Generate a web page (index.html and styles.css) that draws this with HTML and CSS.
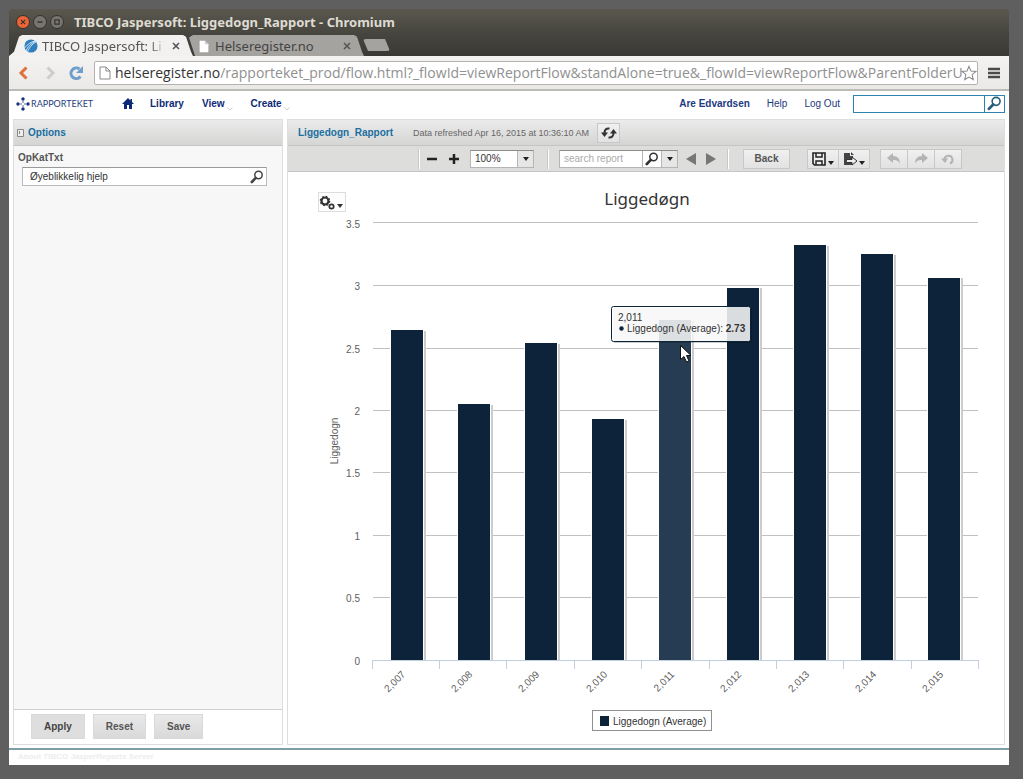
FILE: index.html
```
<!DOCTYPE html>
<html lang="en">
<head>
<meta charset="utf-8">
<title>TIBCO Jaspersoft: Liggedogn_Rapport</title>
<link rel="stylesheet" href="styles.css">
</head>
<body>
<svg class="defs" aria-hidden="true">
  <symbol id="lens" viewBox="0 0 14 14"><circle cx="8.500" cy="5" r="3.700" fill="#fff" fill-opacity=".5" stroke="currentColor" stroke-width="1.500"/><path d="M5.800 7.900 1.800 12" stroke="currentColor" stroke-width="2.600" stroke-linecap="round"/></symbol>
  <symbol id="caret" viewBox="0 0 6 4"><path d="M0 0h6L3 4z" fill="currentColor"/></symbol>
</svg>
<div class="window">
  <header class="titlebar">
    <button class="orb orb-close" aria-label="Close"><svg viewBox="0 0 14 14"><path d="m4.500 4.500 5 5m0-5-5 5"/></svg></button>
    <button class="orb" aria-label="Minimize"><svg viewBox="0 0 14 14"><path d="M4 7h6"/></svg></button>
    <button class="orb" aria-label="Maximize"><svg viewBox="0 0 14 14"><path d="M4.500 4.500h5v5h-5z"/></svg></button>
    <span class="window-title">TIBCO Jaspersoft: Liggedogn_Rapport - Chromium</span>
  </header>
  <div class="tabs">
    <div class="tab tab-active">
      <svg class="favicon" viewBox="0 0 16 16"><circle cx="8" cy="8" r="7.500" fill="#2f7fbf"/><path d="M2 14C4 9 8 5 14 2M4 15c1-4 5-9 10-12M1 10c3-4 6-6 12-8" stroke="#e4f1fa" fill="none"/></svg>
      <span class="tab-text">TIBCO Jaspersoft: Li</span>
      <button class="tab-close" aria-label="Close tab"><svg viewBox="0 0 8 8"><path d="m1 1 6 6m0-6L1 7"/></svg></button>
    </div>
    <div class="tab tab-back">
      <svg class="favicon" viewBox="0 0 16 16"><path d="M3 2h6l4 4v9H3z" fill="#fff"/><path d="M9 2v4h4" fill="#ccc"/></svg>
      <span class="tab-text">Helseregister.no</span>
      <button class="tab-close" aria-label="Close tab"><svg viewBox="0 0 8 8"><path d="m1 1 6 6m0-6L1 7"/></svg></button>
    </div>
    <button class="tab-new" aria-label="New tab"></button>
  </div>
  <div class="navbar">
    <button class="nav-btn" aria-label="Back"><svg viewBox="0 0 16 16"><path d="M10.500 2.500 5 8l5.500 5.500" stroke="#e0713c" stroke-width="3" fill="none"/></svg></button>
    <button class="nav-btn" aria-label="Forward"><svg viewBox="0 0 16 16"><path d="M5.500 2.500 11 8l-5.500 5.500" stroke="#cfcdca" stroke-width="3" fill="none"/></svg></button>
    <button class="nav-btn" aria-label="Reload"><svg viewBox="0 0 16 16"><path d="M12.500 11.500A5.300 5.300 0 1 1 11.500 4" stroke="#6f9dcc" stroke-width="3" fill="none"/><path d="M15 1v7H8z" fill="#6f9dcc"/></svg></button>
    <div class="address">
      <svg class="page-icon" viewBox="0 0 12 14"><path d="M1 1h6l4 4v8H1zM7 1v4h4" fill="#fff" stroke="#8a8a8a"/></svg>
      <div class="url" role="textbox" aria-label="Address"><span class="host">helseregister.no</span>/rapporteket_prod/flow.html?_flowId=viewReportFlow&amp;standAlone=true&amp;_flowId=viewReportFlow&amp;ParentFolderU</div>
      <svg class="star" viewBox="0 0 18 18"><path d="m9 1.500 2.200 5.200 5.600.5-4.300 3.700 1.300 5.500L9 13.500l-4.800 2.900 1.300-5.500L1.200 7.200l5.600-.5z" fill="#fff" stroke="#8a8a8a" stroke-width="1.200"/></svg>
    </div>
    <button class="menu-btn" aria-label="Menu"><svg viewBox="0 0 12 12"><path d="M0 2h12M0 6h12M0 10h12" stroke="#4a4a4a" stroke-width="2.500"/></svg></button>
  </div>

  <div class="page">
    <nav class="site-nav">
      <a class="logo" href="#"><svg viewBox="0 0 14 14" fill="#16307f"><circle cx="7" cy="2" r="1.700"/><circle cx="7" cy="12" r="1.700"/><circle cx="2" cy="7" r="1.700"/><circle cx="12" cy="7" r="1.700"/><circle cx="5" cy="7" r=".7"/><circle cx="9" cy="7" r=".7"/><circle cx="7" cy="5" r=".7"/><circle cx="7" cy="9" r=".7"/></svg><span>RAPPORTEKET</span></a>
      <a class="home" href="#" aria-label="Home"><svg viewBox="0 0 12 11"><path d="M6 0 0 6h2v5h3V7h2v4h3V6h2L10 4V1H8.500v1.500z" fill="#0d2a77"/></svg></a>
      <a class="main-link" href="#">Library</a>
      <a class="main-link" href="#">View<svg class="drop" viewBox="0 0 6 4"><path d="M.5.500 3 3 5.500.500"/></svg></a>
      <a class="main-link" href="#">Create<svg class="drop" viewBox="0 0 6 4"><path d="M.5.500 3 3 5.500.500"/></svg></a>
      <div class="account">
        <a class="user" href="#">Are Edvardsen</a>
        <a href="#">Help</a>
        <a href="#">Log Out</a>
        <form class="site-search"><input type="text" aria-label="Search"><button type="button" aria-label="Search"><svg><use href="#lens"/></svg></button></form>
      </div>
    </nav>

    <main class="columns">
      <section class="panel options">
        <h2 class="panel-head"><svg viewBox="0 0 7 8"><path d="M.5.500h6v7h-6zM2.500 2v3" fill="#eee" stroke="#888"/></svg>Options</h2>
        <div class="options-body">
          <label for="opkat">OpKatTxt</label>
          <div class="field"><input id="opkat" type="text" value="Øyeblikkelig hjelp"><svg><use href="#lens"/></svg></div>
        </div>
        <div class="actions">
          <button class="btn btn-hot">Apply</button><button class="btn">Reset</button><button class="btn">Save</button>
        </div>
      </section>

      <section class="panel report">
        <div class="panel-head">
          <h2>Liggedogn_Rapport</h2>
          <span class="refreshed">Data refreshed Apr 16, 2015 at 10:36:10 AM</span>
          <button class="tool refresh" aria-label="Refresh"><svg viewBox="0 0 16 12"><path d="M8.500 1.500C5 1 3.500 3 3.500 6M7.500 10.500c3.500.5 5-1.500 5-4.500" fill="none" stroke="#333" stroke-width="2"/><path d="M0 5.500h7L3.500 10zM9 6.500h7L12.500 2z" fill="#333"/></svg></button>
        </div>
        <div class="toolbar">
          <span class="sep"></span>
          <button class="glyph" aria-label="Zoom out"><svg viewBox="0 0 12 12"><path d="M1 6h10" stroke="#222" stroke-width="2.500"/></svg></button>
          <button class="glyph" aria-label="Zoom in"><svg viewBox="0 0 12 12"><path d="M1 6h10M6 1v10" stroke="#222" stroke-width="2.500"/></svg></button>
          <div class="combo"><input class="zoom" type="text" value="100%" aria-label="Zoom"><button aria-label="Zoom levels"><svg class="caret"><use href="#caret"/></svg></button></div>
          <span class="sep"></span>
          <div class="combo"><input class="find" type="text" placeholder="search report" aria-label="Search report"><button class="find-go" aria-label="Find"><svg class="lens"><use href="#lens"/></svg></button><button aria-label="Find options"><svg class="caret"><use href="#caret"/></svg></button></div>
          <button class="glyph" aria-label="Previous"><svg viewBox="0 0 12 12"><path d="M11 0v12L1 6z" fill="#777"/></svg></button>
          <button class="glyph glyph-next" aria-label="Next"><svg viewBox="0 0 12 12"><path d="M1 0v12l10-6z" fill="#777"/></svg></button>
          <span class="sep"></span>
          <button class="tool back">Back</button>
          <div class="group">
            <button class="tool" aria-label="Save"><svg class="icon" viewBox="0 0 14 14"><path d="M1 1h12v12H2.500L1 11.500z" fill="#eee" stroke="#222" stroke-width="1.600"/><path d="M4 1v4h6V1M4 13V9h6v4" fill="none" stroke="#222" stroke-width="1.500"/></svg><svg class="caret low"><use href="#caret"/></svg></button>
            <button class="tool" aria-label="Export"><svg class="icon" viewBox="0 0 14 14"><path d="M1 1h6v3h3v9H1z" fill="#444"/><path d="M8 0v3h3z" fill="#444"/><path d="M4 7.500h5V5l5 4-5 4v-2.500H4" fill="#eee" stroke="#333"/></svg><svg class="caret low"><use href="#caret"/></svg></button>
          </div>
          <div class="group group-off">
            <button class="tool" disabled aria-label="Undo"><svg class="icon" viewBox="0 0 14 14"><path d="M0 6 6 1v3c5 0 7 3 7 8-1-3-3-4-7-4v3z" fill="#b4b4b4"/></svg></button>
            <button class="tool" disabled aria-label="Redo"><svg class="icon" viewBox="0 0 14 14"><path d="M14 6 8 1v3c-5 0-7 3-7 8 1-3 3-4 7-4v3z" fill="#b4b4b4"/></svg></button>
            <button class="tool" disabled aria-label="Undo all"><svg class="icon" viewBox="0 0 14 14"><path d="M3.500 7.500A4 4 0 1 1 9 11.500" fill="none" stroke="#b4b4b4" stroke-width="2"/><path d="M0 6.500h7L4 11z" fill="#b4b4b4"/></svg></button>
          </div>
        </div>
        <div class="report-body">
          <svg class="chart" viewBox="0 0 716 572" role="img" aria-label="Liggedøgn">
            <g class="options-icon">
              <rect x="30.500" y="20.500" width="27" height="19" fill="#fdfdfd" stroke="#ddd"/>
              <circle cx="37" cy="29" r="3.500" fill="none" stroke="#333" stroke-width="2.200"/>
              <circle cx="37" cy="29" r="4.700" fill="none" stroke="#333" stroke-width="1.200" stroke-dasharray="1.800 1.900"/>
              <circle cx="43.500" cy="34.500" r="2.200" fill="none" stroke="#333" stroke-width="1.700"/>
              <path d="M49 32h6l-3 4z" fill="#333"/>
            </g>
            <text class="chart-title" x="359" y="33">Liggedøgn</text>
            <path class="grid" d="M85 50.500h605M85 113.500h605M85 176.500h605M85 238.500h605M85 300.500h605M85 363.500h605M85 425.500h605"/>
            <g class="axis-y">
              <text x="72" y="56">3.5</text><text x="72" y="118">3</text><text x="72" y="181">2.5</text><text x="72" y="243">2</text><text x="72" y="305">1.5</text><text x="72" y="368">1</text><text x="72" y="430">0.5</text><text x="72" y="493">0</text>
            </g>
            <text class="axis-title" transform="translate(50 269) rotate(-90)">Liggedogn</text>
            <g class="shadow">
              <rect x="104" y="159" width="34" height="329"/><rect x="171" y="233" width="34" height="255"/><rect x="238" y="172" width="34" height="316"/><rect x="305" y="248" width="34" height="240"/><rect x="372" y="149" width="34" height="339"/><rect x="440" y="116" width="34" height="372"/><rect x="507" y="74" width="34" height="414"/><rect x="574" y="83" width="34" height="405"/><rect x="641" y="106" width="34" height="382"/>
            </g>
            <g class="bars">
              <rect x="102.500" y="157.500" width="33" height="331"/><rect x="169.500" y="231.500" width="33" height="257"/><rect x="236.500" y="170.500" width="33" height="318"/><rect x="303.500" y="246.500" width="33" height="242"/><rect class="hover" x="370.500" y="147.500" width="33" height="341"/><rect x="438.500" y="115.500" width="33" height="373"/><rect x="505.500" y="72.500" width="33" height="416"/><rect x="572.500" y="81.500" width="33" height="407"/><rect x="639.500" y="105.500" width="33" height="383"/>
            </g>
            <path class="axis-line" d="M84 488.500h607M84.500 489v8M151.500 489v8M218.500 489v8M286.500 489v8M353.500 489v8M421.500 489v8M488.500 489v8M555.500 489v8M623.500 489v8M690.500 489v8"/>
            <g class="axis-x">
              <text transform="translate(118 503) rotate(-45)">2,007</text><text transform="translate(185 503) rotate(-45)">2,008</text><text transform="translate(252 503) rotate(-45)">2,009</text><text transform="translate(320 503) rotate(-45)">2,010</text><text transform="translate(387 503) rotate(-45)">2,011</text><text transform="translate(454 503) rotate(-45)">2,012</text><text transform="translate(522 503) rotate(-45)">2,013</text><text transform="translate(589 503) rotate(-45)">2,014</text><text transform="translate(656 503) rotate(-45)">2,015</text>
            </g>
            <rect x="304.500" y="538.500" width="119" height="20" fill="#fff" stroke="#909090"/>
            <rect x="312" y="544" width="9" height="10" fill="#0d233a"/>
            <text class="label-dark" x="325" y="553">Liggedogn (Average)</text>
            <g class="tooltip">
              <rect class="tip-shadow" x="325" y="136" width="139" height="35" rx="2"/>
              <rect class="tip-box" x="323.500" y="134.500" width="139" height="35" rx="2"/>
              <text class="label-dark" x="330" y="149">2,011</text>
              <circle cx="333.500" cy="156.500" r="2.200" fill="#0d233a"/>
              <text class="label-dark" x="339" y="160">Liggedogn (Average): <tspan font-weight="bold">2.73</tspan></text>
            </g>
            <path d="M392.500 173.500v14l3.500-3 2.500 5.500 2.500-1-2.500-5.500h4.500z" fill="#fff" stroke="#111"/>
          </svg>
        </div>
      </section>
    </main>
    <footer class="site-foot"><a href="#">About TIBCO JasperReports Server</a></footer>
  </div>
</div>
</body>
</html>
```
FILE: styles.css
```
* { box-sizing: border-box; }
html, body { height: 100%; }
body {
  margin: 0;
  padding: 9px 14px 14px 9px;
  background: #5f5f5f;
  font: 10px/14px "Liberation Sans", Arial, sans-serif;
  color: #555;
}
button, input { font: inherit; color: inherit; margin: 0; padding: 0; border: 0; border-radius: 0; background: none; min-width: 0; outline: 0; }
svg { display: block; flex: none; }
a { color: #1d3a80; text-decoration: none; }
h2 { margin: 0; font-size: 10px; line-height: 14px; }
.defs { position: absolute; width: 0; height: 0; }

.window { display: flex; flex-direction: column; height: 100%; background: #3c3b37; border-radius: 5px 5px 0 0; overflow: hidden; }
.titlebar { display: flex; align-items: center; gap: 3px; height: 26px; padding-left: 7px; background: linear-gradient(#5a584e, #45443e); }
.orb { width: 14px; height: 14px; border-radius: 50%; background: #77756d; border: 1px solid #33322d; }
.orb svg { width: 12px; height: 12px; fill: none; stroke: #36352f; stroke-width: 1.5; }
.orb-close { background: #ee6438; }
.window-title { margin-left: 7px; font: bold 13px/18px "Noto Sans", sans-serif; color: #dfdbd2; }

.tabs { display: flex; align-items: flex-end; height: 21px; background: linear-gradient(#45443e, #3a3935); }
.tab { display: flex; align-items: center; height: 21px; font: 13px/20px "Noto Sans", sans-serif; }
.tab-active { width: 184px; padding: 0 13px 0 15px; background: #f2f1f0; color: #555; clip-path: polygon(0 100%, 5px 80%, 10px 8%, 13px 0, 174px 0, 177px 8%, 182px 80%, 100% 100%); }
.tab-back { width: 178px; margin-left: -7px; padding: 0 13px 0 11px; background: #a5a39f; color: #444; clip-path: polygon(9px 100%, 3px 12%, 7px 0, 168px 0, 171px 8%, 176px 80%, 100% 100%); }
.favicon { width: 14px; height: 14px; }
.tab-text { flex: 1; margin: 0 7px 0 4px; white-space: nowrap; }
.tab-active .tab-text { mask-image: linear-gradient(90deg, #000 88%, transparent); }
.tab-close svg { width: 8px; height: 8px; stroke: #555; stroke-width: 1.6; fill: none; }
.tab-new { width: 27px; height: 12px; margin: 0 0 5px -1px; background: #a5a39f; border-radius: 3px; clip-path: polygon(0 0, 22px 0, 100% 100%, 5px 100%); }

.navbar { display: flex; align-items: center; gap: 10px; height: 35px; padding: 0 9px 0 7px; background: linear-gradient(#f4f3f2, #ebe9e7); border-bottom: 2px solid #bdbbb8; }
.nav-btn svg { width: 16px; height: 16px; }
.address { flex: 1; display: flex; align-items: center; min-width: 0; height: 24px; padding: 0 0 0 4px; background: #fff; border: 1px solid #b5b2ae; border-radius: 2px; }
.page-icon { width: 12px; height: 14px; }
.url { flex: 1; min-width: 0; margin-left: 4px; white-space: nowrap; font: 14px/20px "Open Sans", sans-serif; color: #909090; }
.host { color: #333; }
.star { width: 16px; height: 16px; }
.menu-btn svg { width: 12px; height: 12px; }

.page { flex: 1; display: flex; flex-direction: column; min-height: 0; background: #fff; }
.site-nav { display: flex; align-items: center; height: 28px; padding: 0 4px 3px 7px; }
.logo { display: flex; align-items: center; width: 106px; gap: 1px; color: #26407f; font: 9px/14px Lato, sans-serif; }
.logo svg { width: 14px; height: 14px; }
.home svg { width: 12px; height: 11px; }
.main-link { position: relative; margin-left: 18px; font-weight: bold; color: #0d2a77; }
.home + .main-link { margin-left: 16px; }
.main-link + .main-link + .main-link { margin-left: 26px; }
.drop { position: absolute; left: 100%; bottom: 0; width: 6px; height: 4px; margin-left: 2px; fill: none; stroke: #ccc; }
.account { display: flex; align-items: center; gap: 17px; margin-left: auto; }
.user { font-weight: bold; }
.site-search { display: flex; height: 18px; margin-left: -4px; border: 1px solid #2d82ae; }
.site-search input { width: 131px; border-right: 1px solid #2d82ae; }
.site-search button { width: 19px; padding-left: 2px; color: #235f7a; }
.site-search svg { width: 15px; height: 15px; }

.columns { flex: 1; display: flex; gap: 4px; min-height: 0; padding: 0 4px 3px; }
.panel { display: flex; flex-direction: column; border: 1px solid #ddd; }
.panel-head { display: flex; align-items: center; height: 26px; background: linear-gradient(#ebebeb, #d5d5d4); border-bottom: 1px solid #c5c5c5; color: #1a6fa0; }
.options { width: 270px; background: #f7f7f7; }
.options .panel-head { gap: 4px; padding-left: 3px; }
.options .panel-head svg { width: 7px; height: 8px; }
.options-body { flex: 1; padding: 5px 15px 0 4px; }
.options-body label { display: block; font-weight: bold; }
.field { display: flex; align-items: center; height: 19px; margin: 2px 0 0 4px; background: #fff; border: 1px solid #bbb; border-top-color: #999; }
.field input { flex: 1; padding-left: 7px; color: #333; }
.field svg { width: 14px; height: 14px; margin-right: 2px; color: #444; }
.actions { display: flex; gap: 8px; height: 35px; padding: 4px 0 0 17px; background: #fff; border-top: 1px solid #d0d0d0; }
.btn { height: 25px; padding: 0 12px; background: linear-gradient(#e9e9e9, #d9d9d9); border: 1px solid #dcd8d8; font-weight: bold; }
.btn-hot { background: #dedede; color: #444; }

.report { flex: 1; min-width: 0; }
.report .panel-head { padding-left: 10px; }
.refreshed { margin-left: 20px; font-size: 9px; color: #666; }
.tool { display: flex; align-items: center; justify-content: center; height: 20px; background: linear-gradient(#f0f0f0, #e2e2e2); border: 1px solid #c8c8c8; }
.refresh { width: 23px; margin-left: 8px; }
.refresh svg { width: 16px; height: 12px; }
.toolbar { display: flex; align-items: center; height: 26px; padding-left: 130px; background: #dddddc; border-bottom: 1px solid #c5c5c5; }
.sep { width: 2px; height: 20px; background: #fff; border-left: 1px solid #c8c8c8; }
.glyph { margin-left: 10px; }
.sep + .glyph { margin-left: 6px; }
.combo + .glyph { margin-left: 7px; }
.glyph svg { width: 12px; height: 12px; }
.glyph-next { margin-left: 8px; margin-right: 10px; }
.combo { display: flex; height: 18px; margin: 0 13px 0 10px; border: 1px solid #b5b5b5; border-top-color: #8c8c8c; }
.combo:has(.find) { margin-right: 0; }
.combo input { padding-left: 4px; background: #fff; color: #333; }
.combo input::placeholder { color: #aaa; opacity: 1; }
.zoom { width: 46px; }
.find { width: 82px; }
.combo button { display: flex; align-items: center; justify-content: center; width: 16px; border-left: 1px solid #b5b5b5; background: #e6e6e6; }
.combo .find-go { width: 19px; background: #fff; color: #333; }
.lens { width: 14px; height: 14px; }
.caret { width: 6px; height: 4px; color: #222; }
.back { width: 47px; margin-left: 14px; font-weight: bold; }
.group { display: flex; margin-left: 17px; }
.group .tool { width: 32px; gap: 2px; }
.group .tool + .tool { margin-left: -1px; }
.group-off { margin-left: 10px; }
.group-off .tool { width: 28px; }
.icon { width: 14px; height: 14px; }
.low { margin-top: 8px; }

.report-body { flex: 1; min-height: 0; background: #fff; }
.chart { width: 100%; height: 100%; font-size: 10px; }
.chart-title { font: 17px "Noto Sans", sans-serif; fill: #333; text-anchor: middle; }
.grid { stroke: #c0c0c0; fill: none; }
.axis-line { stroke: #c0d0e0; fill: none; }
.axis-y, .axis-x { fill: #606060; text-anchor: end; }
.axis-title { fill: #606060; text-anchor: middle; }
.shadow { fill: #ccc; }
.bars rect { fill: #0d233a; stroke: #fff; }
.bars .hover { fill: #263c53; }
.label-dark { fill: #333; }
.tip-shadow { fill: #000; fill-opacity: .2; }
.tip-box { fill: #fff; fill-opacity: .85; stroke: #0d233a; }

.site-foot { height: 17px; padding-left: 9px; border-top: 2px solid #7f9fa8; font-size: 8px; line-height: 13px; font-weight: bold; }
.site-foot a { color: #ededed; }
```
